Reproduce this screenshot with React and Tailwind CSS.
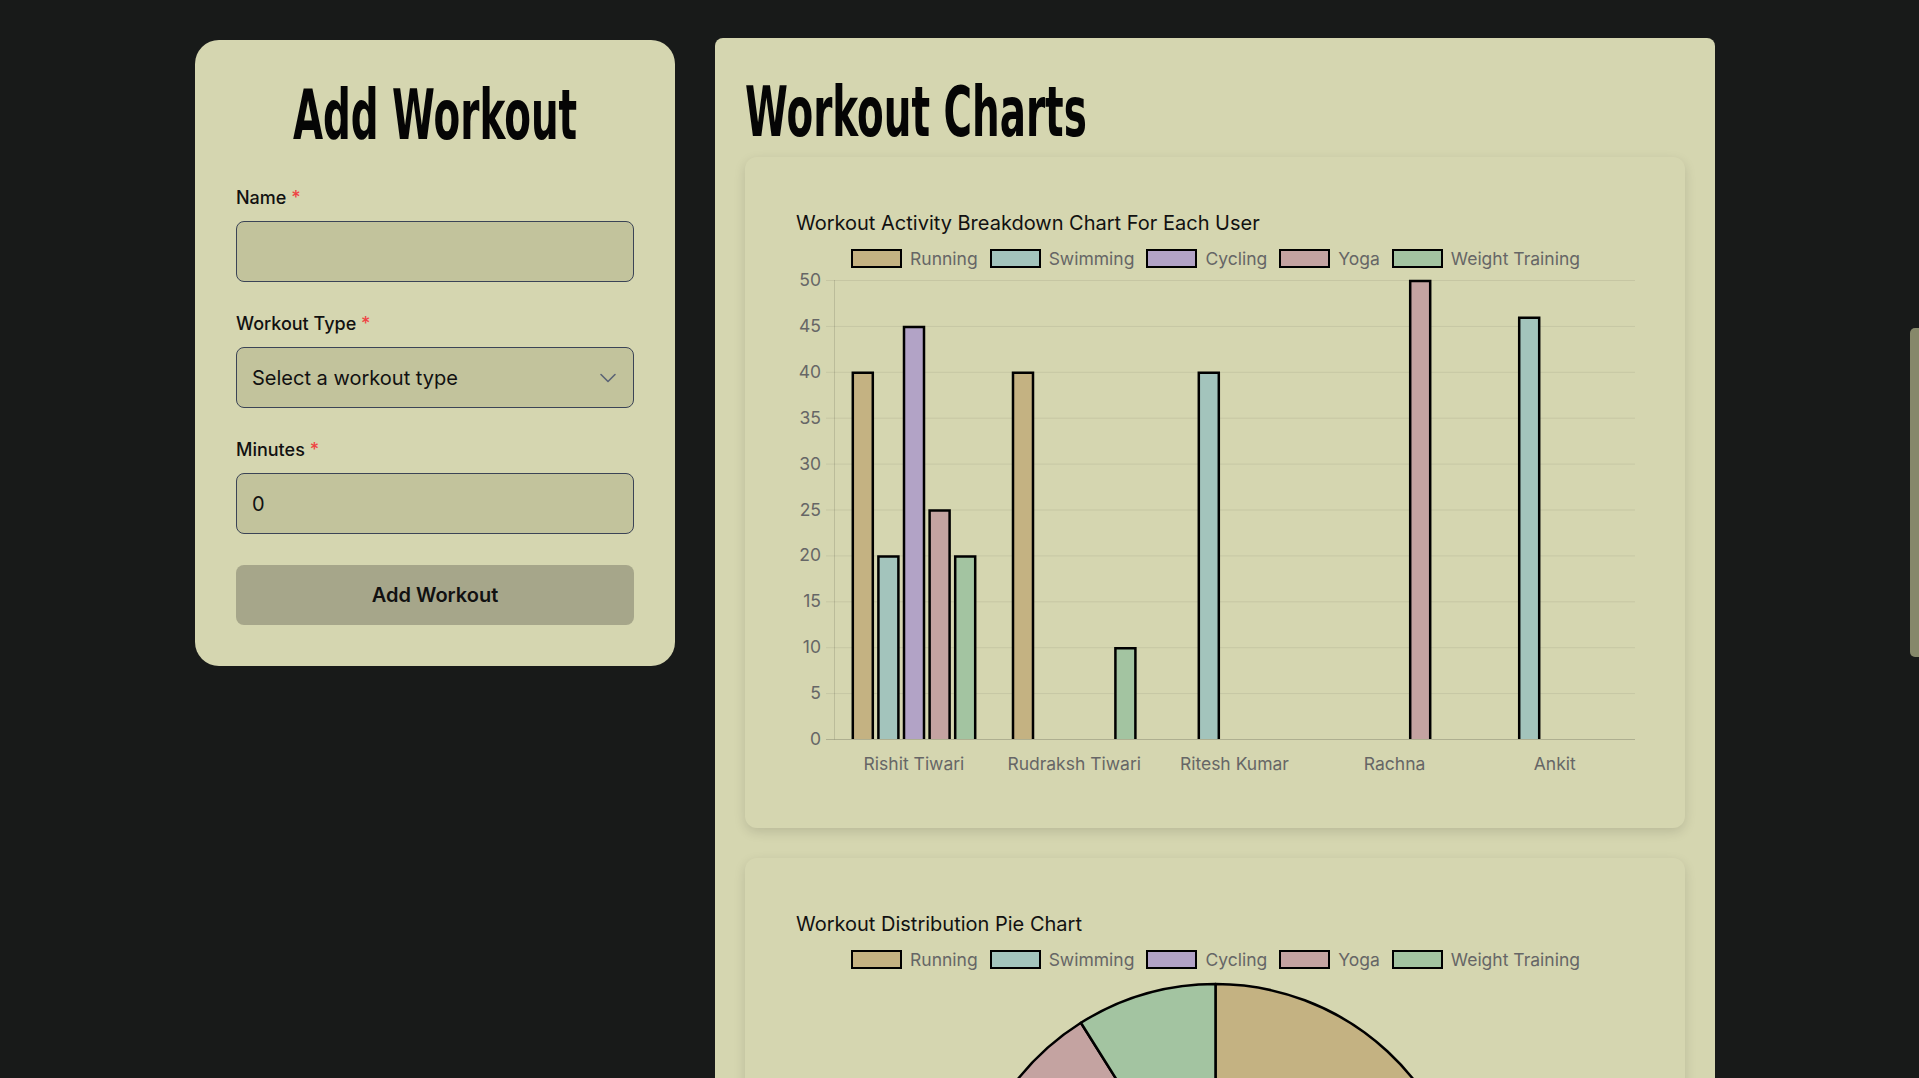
import React from "react";
import { ChevronDown } from "lucide-react";

const COLORS = {
  Running: "#c4b282",
  Swimming: "#a3c4bc",
  Cycling: "#b2a3c6",
  Yoga: "#c4a3a1",
  "Weight Training": "#a3c4a1",
};
const TYPES = Object.keys(COLORS);

const USERS = [
  { name: "Rishit Tiwari", v: [40, 20, 45, 25, 20] },
  { name: "Rudraksh Tiwari", v: [40, 0, 0, 0, 10] },
  { name: "Ritesh Kumar", v: [0, 40, 0, 0, 0] },
  { name: "Rachna", v: [0, 0, 0, 50, 0] },
  { name: "Ankit", v: [0, 46, 0, 0, 0] },
];

function Legend() {
  return (
    <div className="mt-[14px] flex h-[19px] items-center justify-center gap-[12px]">
      {TYPES.map((t) => (
        <div key={t} className="flex items-center gap-[8px]">
          <span
            className="block h-[19px] w-[51px] border-2 border-black"
            style={{ backgroundColor: COLORS[t] }}
          />
          <span className="text-[17.5px] leading-[19px] text-[#666666]">{t}</span>
        </div>
      ))}
    </div>
  );
}

function BarChart() {
  const y = (v) => 469 - v * 9.18;
  const ticks = [0, 5, 10, 15, 20, 25, 30, 35, 40, 45, 50];
  return (
    <svg width="839" height="510" className="mt-[2px] block" style={{ fontFamily: "Inter, sans-serif" }}>
      {ticks.map((t) => (
        <g key={t}>
          <line x1="30" x2="839" y1={y(t) + 0.5} y2={y(t) + 0.5} stroke={t === 0 ? "rgba(0,0,0,0.18)" : "rgba(0,0,0,0.07)"} strokeWidth="1" />
          <text x="25" y={y(t) + 6} textAnchor="end" fontSize="17.5" fill="#666666">
            {t}
          </text>
        </g>
      ))}
      <line x1="38.5" x2="38.5" y1={y(50)} y2={y(0) + 0.5} stroke="rgba(0,0,0,0.12)" strokeWidth="1" />
      {USERS.map((u, i) => {
        const cx = 118 + 160.2 * i;
        return (
          <g key={u.name}>
            {u.v.map((v, j) => {
              if (!v) return null;
              const c = cx + (j - 2) * 25.6;
              const left = c - 11;
              const top = y(v);
              return (
                <g key={j}>
                  <rect x={left + 1} y={top + 1} width="20" height={469 - top - 1} fill={COLORS[TYPES[j]]} />
                  <path
                    d={`M${left + 1} 469 V${top + 1} H${left + 21} V469`}
                    fill="none"
                    stroke="#000"
                    strokeWidth="2.5"
                  />
                </g>
              );
            })}
            <text x={cx} y="500" textAnchor="middle" fontSize="17.5" fill="#666666">
              {u.name}
            </text>
          </g>
        );
      })}
    </svg>
  );
}

function PieChart() {
  const totals = TYPES.map((_, j) => USERS.reduce((s, u) => s + u.v[j], 0));
  const sum = totals.reduce((a, b) => a + b, 0);
  const cx = 419.5;
  const cy = 266;
  const r = 253;
  let acc = 0;
  const pt = (a) => {
    const rad = (a * Math.PI) / 180;
    return [cx + r * Math.sin(rad), cy - r * Math.cos(rad)];
  };
  return (
    <svg width="839" height="540" className="mt-[2px] block">
      {totals.map((t, j) => {
        const a0 = (acc / sum) * 360;
        acc += t;
        const a1 = (acc / sum) * 360;
        const [x0, y0] = pt(a0);
        const [x1, y1] = pt(a1);
        const large = a1 - a0 > 180 ? 1 : 0;
        return (
          <path
            key={j}
            d={`M${cx} ${cy} L${x0} ${y0} A${r} ${r} 0 ${large} 1 ${x1} ${y1} Z`}
            fill={COLORS[TYPES[j]]}
            stroke="#000"
            strokeWidth="2.5"
            strokeLinejoin="round"
          />
        );
      })}
    </svg>
  );
}

function ChartCard({ title, children }) {
  return (
    <div className="rounded-xl bg-[#d5d6b0] pb-[48px] pl-[51px] pr-[50px] pt-[54px] shadow-[0_4px_12px_rgba(0,0,0,0.13)]">
      <div className="text-[20px] leading-[24px] text-[#111111]">{title}</div>
      <Legend />
      {children}
    </div>
  );
}

function Field({ label, children }) {
  return (
    <div>
      <label className="mb-[11px] block text-[18px] font-medium leading-[24px] text-[#111111]">
        {label} <span className="text-[#ef4444]">*</span>
      </label>
      {children}
    </div>
  );
}

const inputCls =
  "h-[61px] w-full rounded-lg border border-[#3b4456] bg-[#c2c39c] px-[15px] text-[20px] text-[#111111] outline-none";

export default function App() {
  return (
    <div className="flex h-screen overflow-hidden bg-[#181a19] font-['Inter',sans-serif]">
      <main className="flex flex-1 items-start justify-center gap-[40px] pt-[38px]">
        <section className="mt-[2px] w-[480px] rounded-3xl bg-[#d5d6b0] px-[41px] pb-[41px] pt-[42px]">
          <h1 className="flex origin-center scale-x-[0.563] justify-center whitespace-nowrap font-['DejaVu_Sans',sans-serif] text-[69px] font-bold leading-[66px] text-[#050505]">
            Add Workout
          </h1>
          <div className="mt-[38px] flex flex-col gap-[30px]">
            <Field label="Name">
              <div className={inputCls} />
            </Field>
            <Field label="Workout Type">
              <div className={inputCls + " relative flex items-center"}>
                <span>Select a workout type</span>
                <ChevronDown
                  size={28}
                  strokeWidth={1.4}
                  className="absolute right-[11px] top-1/2 -translate-y-1/2 text-[#5b6475]"
                />
              </div>
            </Field>
            <Field label="Minutes">
              <div className={inputCls + " flex items-center"}>0</div>
            </Field>
          </div>
          <button className="mt-[31px] h-[60px] w-full rounded-lg bg-[#a6a68a] text-[20px] font-semibold text-[#111111]">
            Add Workout
          </button>
        </section>
        <section className="w-[1000px] rounded-lg bg-[#d5d6b0] px-[30px] pt-[41px]">
          <h1 className="origin-left scale-x-[0.563] whitespace-nowrap font-['DejaVu_Sans',sans-serif] text-[69px] font-bold leading-[66px] text-[#050505]">
            Workout Charts
          </h1>
          <div className="mt-[12px] flex flex-col gap-[30px] pb-[30px]">
            <ChartCard title="Workout Activity Breakdown Chart For Each User">
              <BarChart />
            </ChartCard>
            <ChartCard title="Workout Distribution Pie Chart">
              <PieChart />
            </ChartCard>
          </div>
        </section>
      </main>
      <aside className="w-[9px] shrink-0">
        <div className="mt-[328px] h-[329px] w-[9px] rounded-l-[5px] bg-[#86886a]" />
      </aside>
    </div>
  );
}
